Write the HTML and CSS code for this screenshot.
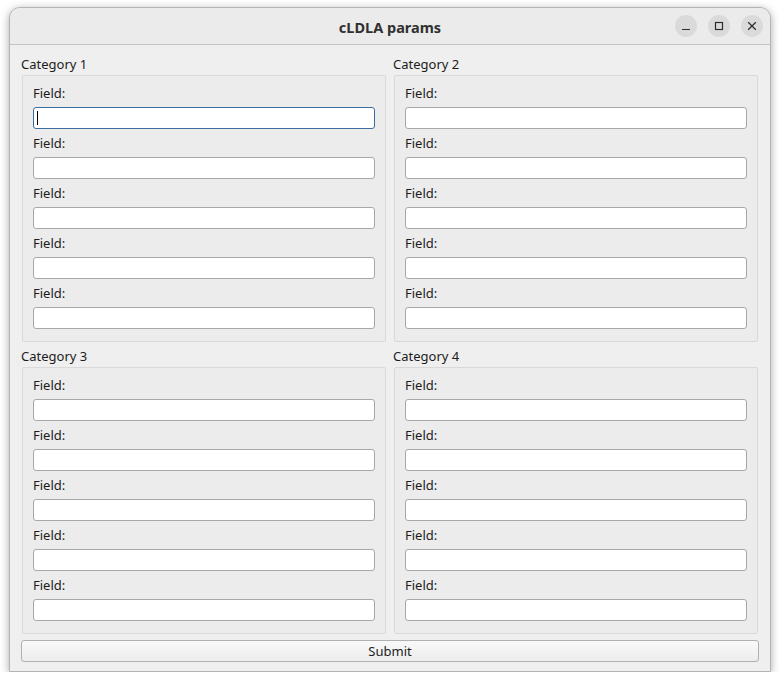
FILE: index.html
```html
<!DOCTYPE html>
<html>
<head>
<meta charset="utf-8">
<title>cLDLA params</title>
<link rel="stylesheet" href="styles.css">
</head>
<body>
<div class="window">
  <div class="titlebar">
    <div class="title">cLDLA params</div>
    <div class="controls">
      <div class="ctl"><svg width="10" height="10" viewBox="0 0 10 10"><path d="M1 8.5h8" stroke="#2e2e2e" stroke-width="1.2"/></svg></div>
      <div class="ctl"><svg width="10" height="10" viewBox="0 0 10 10"><rect x="1.5" y="1.5" width="7" height="7" fill="none" stroke="#2e2e2e" stroke-width="1.2"/></svg></div>
      <div class="ctl"><svg width="10" height="10" viewBox="0 0 10 10"><path d="M1.2 1.2l7.6 7.6M8.8 1.2l-7.6 7.6" stroke="#2e2e2e" stroke-width="1.3"/></svg></div>
    </div>
  </div>
  <div class="content">
    <div class="grid">
      <section class="cat">
        <div class="cat-label">Category 1</div>
        <div class="group">
          <div class="field"><label>Field:</label><div class="input focus"><span class="caret"></span></div></div>
          <div class="field"><label>Field:</label><div class="input"></div></div>
          <div class="field"><label>Field:</label><div class="input"></div></div>
          <div class="field"><label>Field:</label><div class="input"></div></div>
          <div class="field"><label>Field:</label><div class="input"></div></div>
        </div>
      </section>
      <section class="cat">
        <div class="cat-label">Category 2</div>
        <div class="group">
          <div class="field"><label>Field:</label><div class="input"></div></div>
          <div class="field"><label>Field:</label><div class="input"></div></div>
          <div class="field"><label>Field:</label><div class="input"></div></div>
          <div class="field"><label>Field:</label><div class="input"></div></div>
          <div class="field"><label>Field:</label><div class="input"></div></div>
        </div>
      </section>
      <section class="cat">
        <div class="cat-label">Category 3</div>
        <div class="group">
          <div class="field"><label>Field:</label><div class="input"></div></div>
          <div class="field"><label>Field:</label><div class="input"></div></div>
          <div class="field"><label>Field:</label><div class="input"></div></div>
          <div class="field"><label>Field:</label><div class="input"></div></div>
          <div class="field"><label>Field:</label><div class="input"></div></div>
        </div>
      </section>
      <section class="cat">
        <div class="cat-label">Category 4</div>
        <div class="group">
          <div class="field"><label>Field:</label><div class="input"></div></div>
          <div class="field"><label>Field:</label><div class="input"></div></div>
          <div class="field"><label>Field:</label><div class="input"></div></div>
          <div class="field"><label>Field:</label><div class="input"></div></div>
          <div class="field"><label>Field:</label><div class="input"></div></div>
        </div>
      </section>
    </div>
    <button class="submit">Submit</button>
  </div>
</div>
</body>
</html>
```

FILE: styles.css
```css
html, body {
  margin: 0;
  padding: 0;
  background: #ffffff;
}
body {
  padding: 7px 0 0 9px;
  font-family: "Noto Sans", "DejaVu Sans", sans-serif;
  color: #1c1c1c;
}
.window {
  width: 760px;
  height: 663px;
  border: 1px solid #b4b4b4;
  border-radius: 11px 11px 0 0;
  background: #efefef;
  box-shadow: 0 2px 9px rgba(0, 0, 0, 0.35);
  display: flex;
  flex-direction: column;
  overflow: hidden;
}
.titlebar {
  height: 36px;
  border-bottom: 1px solid #c2c2c2;
  background: #ebebeb;
  display: flex;
  align-items: center;
  justify-content: center;
  position: relative;
}
.title {
  font-weight: bold;
  font-size: 14.5px;
  color: #303030;
  padding-top: 1px;
}
.controls {
  position: absolute;
  right: 7px;
  top: 7px;
  display: flex;
  gap: 11px;
}
.ctl {
  width: 22px;
  height: 22px;
  border-radius: 50%;
  background: #dadada;
  display: flex;
  align-items: center;
  justify-content: center;
}
.content {
  padding: 5px 10px 0 11px;
  display: flex;
  flex-direction: column;
}
.grid {
  display: grid;
  grid-template-columns: 366px 366px;
  column-gap: 6px;
}
.cat-label {
  font-size: 13px;
  height: 20px;
  line-height: 18px;
  padding-top: 5px;
}
.group {
  margin: 0 1px;
  border: 1px solid #d9d9d9;
  border-radius: 2px;
  background: #ececec;
  padding: 9px 10px 12px 10px;
  display: flex;
  flex-direction: column;
  gap: 6px;
}
.field {
  display: flex;
  flex-direction: column;
  gap: 4px;
}
.field label {
  font-size: 13px;
  height: 18px;
  line-height: 16px;
}
.input {
  height: 20px;
  border: 1px solid #a8a8a8;
  border-radius: 3px;
  background: #ffffff;
  position: relative;
}
.input.focus {
  border-color: #3b6da3;
}
.caret {
  position: absolute;
  left: 3px;
  top: 3px;
  width: 1px;
  height: 14px;
  background: #000;
}
.submit {
  margin-top: 6px;
  height: 22px;
  width: 738px;
  border: 1px solid #b0b0b0;
  border-radius: 3px;
  background: linear-gradient(#f9f9f9, #ededed);
  font-family: "Noto Sans", "DejaVu Sans", sans-serif;
  font-size: 13px;
  color: #1c1c1c;
  padding: 0;
}
```
